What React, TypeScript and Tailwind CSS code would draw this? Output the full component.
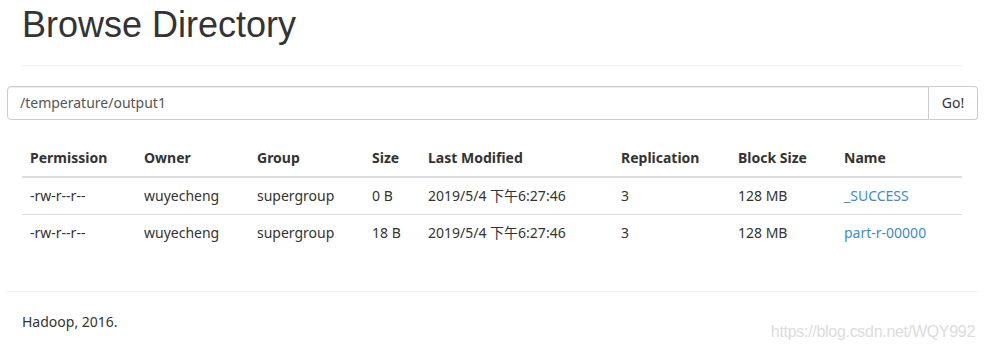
const COLS = [
  { label: "Permission", w: "w-[114px]" },
  { label: "Owner", w: "w-[113px]" },
  { label: "Group", w: "w-[115px]" },
  { label: "Size", w: "w-[56px]" },
  { label: "Last Modified", w: "w-[193px]" },
  { label: "Replication", w: "w-[117px]" },
  { label: "Block Size", w: "w-[106px]" },
  { label: "Name", w: "w-[126px]" },
];

const ROWS = [
  ["-rw-r--r--", "wuyecheng", "supergroup", "0 B", "2019/5/4 下午6:27:46", "3", "128 MB", "_SUCCESS"],
  ["-rw-r--r--", "wuyecheng", "supergroup", "18 B", "2019/5/4 下午6:27:46", "3", "128 MB", "part-r-00000"],
];

export default function App() {
  return (
    <div className="relative w-[985px] h-[352px] bg-white text-[#333] overflow-hidden font-['Segoe_UI','Noto_Sans','Noto_Sans_CJK_SC',sans-serif] text-[14px]">
      {/* Header */}
      <div className="mx-[22px] pt-[5px] pb-[20px] border-b border-[#eee] w-[940px]">
        <h1 className="text-[36px] leading-[1.1] font-['Liberation_Sans',Arial,sans-serif] font-normal">
          Browse Directory
        </h1>
      </div>

      {/* Path input */}
      <div className="mx-[7px] mt-[20px] flex h-[34px]">
        <div className="flex-1 flex items-center px-[12px] border border-[#ccc] rounded-l-[4px] text-[#555] shadow-[inset_0_1px_1px_rgba(0,0,0,0.075)]">
          /temperature/output1
        </div>
        <button className="w-[49px] border border-l-0 border-[#ccc] rounded-r-[4px] bg-white text-[#333]">
          Go!
        </button>
      </div>

      {/* Listing */}
      <table className="ml-[22px] mt-[20px] border-collapse w-[940px]">
        <thead>
          <tr className="border-b-2 border-[#ddd]">
            {COLS.map((c) => (
              <th key={c.label} className={`${c.w} text-left font-bold px-[8px] py-[8px] leading-[20px]`}>
                {c.label}
              </th>
            ))}
          </tr>
        </thead>
        <tbody>
          {ROWS.map((r, i) => (
            <tr key={i} className={i === 0 ? "border-b border-[#ddd]" : ""}>
              {r.map((v, j) => (
                <td key={j} className="px-[8px] py-[8px] leading-[20px] whitespace-nowrap">
                  {j === 7 ? <a className="text-[#428bca]">{v}</a> : v}
                </td>
              ))}
            </tr>
          ))}
        </tbody>
      </table>

      {/* Footer */}
      <div className="mx-[7px] mt-[40px] border-t border-[#eee]" />
      <p className="ml-[22px] mt-[20px] leading-[20px]">
        Hadoop, 2016.
      </p>

      <span className="absolute right-[10px] bottom-[8px] text-[16px] text-[#dcdcdc] font-['Liberation_Sans',Arial,sans-serif] tracking-[-0.3px]">
        https://blog.csdn.net/WQY992
      </span>
    </div>
  );
}
